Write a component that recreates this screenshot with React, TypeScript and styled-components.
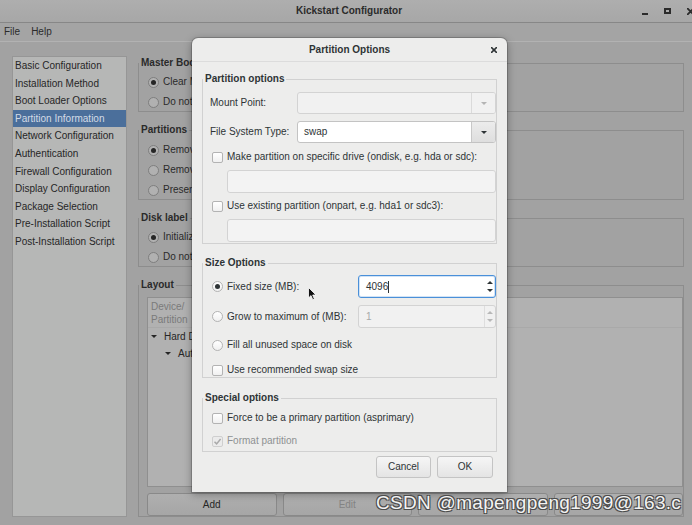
import React from "react";
import styled, { createGlobalStyle } from "styled-components";

const GlobalStyle = createGlobalStyle`
  html, body {
    margin: 0;
    padding: 0;
    background: #a2a2a2;
  }
  body {
    font-family: "Liberation Sans", Arial, sans-serif;
  }
  * {
    box-sizing: border-box;
  }
`;

const Screen = styled.div`
  position: relative;
  width: 692px;
  height: 525px;
  overflow: hidden;
  display: flex;
  flex-direction: column;
  background: #a2a2a2;
  color: #2a2a2a;
  font-size: 10px;
  line-height: 1.2;
`;

/* ---------- main window chrome ---------- */

const TitleBar = styled.div`
  flex: none;
  height: 23px;
  display: grid;
  grid-template-columns: 1fr auto 1fr;
  align-items: center;
  background: linear-gradient(#aeaeae, #a7a7a7);
  border-bottom: 1px solid #878787;
`;

const WindowTitle = styled.div`
  grid-column: 2;
  font-weight: bold;
  color: #2b2b2b;
  padding-left: 6px;
`;

const WindowControls = styled.div`
  grid-column: 3;
  justify-self: end;
  display: flex;
  align-items: center;
  gap: 16px;
  margin-right: -2px;
`;

const MinIcon = styled.span`
  width: 6px;
  height: 2px;
  margin-top: 5px;
  background: #2b2b2b;
`;

const MaxIcon = styled.span`
  width: 7px;
  height: 6px;
  border: 2px solid #2b2b2b;
`;

const MenuBar = styled.div`
  flex: none;
  height: 19px;
  display: flex;
  align-items: center;
  gap: 11px;
  padding-left: 4px;
  border-bottom: 1px solid #b2b2b2;
  background: #a4a4a4;
`;

const MenuItem = styled.span`
  color: #2b2b2b;
`;

const Body = styled.div`
  flex: 1;
  min-height: 0;
  display: flex;
  gap: 11px;
  padding: 14px 8px 8px 12px;
`;

const SideList = styled.div`
  flex: none;
  width: 115px;
  border: 1px solid #969696;
  background: #b6b7b6;
`;

const SideItem = styled.div<{ $selected?: boolean }>`
  height: 17.6px;
  line-height: 17.6px;
  padding-left: 2px;
  white-space: nowrap;
  color: ${(p) => (p.$selected ? "#d3dbe6" : "#262626")};
  background: ${(p) => (p.$selected ? "#4b6f9b" : "transparent")};
`;

const RightColumn = styled.div`
  flex: 1;
  min-width: 0;
  display: flex;
  flex-direction: column;
  gap: 11px;
`;

/* ---------- frames (GtkFrame look) ---------- */

const Fieldset = styled.fieldset<{ $light?: boolean; $grow?: boolean }>`
  margin: 0;
  padding: 0;
  min-width: 0;
  border: 1px solid ${(p) => (p.$light ? "#d1d1d1" : "#8d8d8d")};
  display: flex;
  flex-direction: column;
  flex: ${(p) => (p.$grow ? "1" : "none")};
  min-height: 0;
`;

const Legend = styled.legend`
  padding: 0 2px;
  margin: 0;
  line-height: 14px;
  font-weight: bold;
  white-space: nowrap;
`;

const FrameBody = styled.div<{ $pad: string; $grow?: boolean; $gap?: number }>`
  padding: ${(p) => p.$pad};
  display: flex;
  flex-direction: column;
  gap: ${(p) => p.$gap ?? 0}px;
  flex: ${(p) => (p.$grow ? "1" : "none")};
  min-height: 0;
`;

/* ---------- main window widgets ---------- */

const MainOption = styled.div`
  height: 18px;
  display: flex;
  align-items: center;
  gap: 4px;
  white-space: nowrap;
  color: #2a2a2a;
`;

const RadioCircle = styled.span<{ $on?: boolean; $dim?: boolean }>`
  flex: none;
  width: 11px;
  height: 11px;
  border-radius: 50%;
  border: 1px solid ${(p) => (p.$dim ? "#7e7e7e" : "#b3b3b3")};
  background: ${(p) => (p.$dim ? "#b1b1b1" : "linear-gradient(#ffffff, #f0f0f0)")};
  display: inline-flex;
  align-items: center;
  justify-content: center;

  &::after {
    content: "";
    width: 5px;
    height: 5px;
    border-radius: 50%;
    background: ${(p) => (p.$dim ? "#262626" : "#2e3436")};
    display: ${(p) => (p.$on ? "block" : "none")};
  }
`;

const Tree = styled.div`
  flex: 1;
  min-height: 0;
  border: 1px solid #8f8f8f;
  background: #b1b1b1;
  display: flex;
  flex-direction: column;
`;

const TreeHeader = styled.div`
  flex: none;
  height: 30px;
  padding: 2px 0 0 3px;
  border-bottom: 1px solid #a9a9a9;
  color: #7a7a7a;
  line-height: 13px;
`;

const TreeRow = styled.div<{ $depth: number }>`
  height: 17px;
  display: flex;
  align-items: center;
  gap: 7px;
  padding-left: ${(p) => 3 + p.$depth * 14}px;
  white-space: nowrap;
  color: #262626;
`;

const ButtonRow = styled.div`
  flex: none;
  height: 23px;
  margin-top: 6px;
  display: grid;
  grid-template-columns: repeat(4, 1fr);
  gap: 6px;
`;

const MainButton = styled.div<{ $disabled?: boolean }>`
  border: 1px solid #898989;
  border-radius: 3px;
  background: linear-gradient(#afafaf, #a6a6a6);
  color: ${(p) => (p.$disabled ? "#838383" : "#262626")};
  display: flex;
  align-items: center;
  justify-content: center;
`;

/* ---------- dialog ---------- */

const Dialog = styled.div`
  position: absolute;
  left: 192px;
  top: 38px;
  width: 315px;
  height: 454px;
  overflow: hidden;
  display: flex;
  flex-direction: column;
  background: #ededec;
  color: #2e3436;
  border-radius: 6px 6px 0 0;
  box-shadow: 0 0 0 1px rgba(0, 0, 0, 0.18), 0 2px 8px rgba(0, 0, 0, 0.35);
`;

const DialogTitle = styled.div`
  flex: none;
  height: 24px;
  padding-top: 1px;
  display: grid;
  grid-template-columns: 1fr auto 1fr;
  align-items: center;
  border-bottom: 1px solid #dcdcdc;
`;

const DialogTitleText = styled.div`
  grid-column: 2;
  font-weight: bold;
`;

const DialogClose = styled.div`
  grid-column: 3;
  justify-self: end;
  padding-right: 10px;
  display: flex;
`;

const DialogBody = styled.div`
  flex: 1;
  display: flex;
  flex-direction: column;
  gap: 12px;
  padding: 10px 10px 0 10px;
`;

const FieldGrid = styled.div<{ $labelWidth: number; $h: number; $mt?: number }>`
  display: grid;
  grid-template-columns: ${(p) => p.$labelWidth}px 1fr;
  align-items: center;
  height: ${(p) => p.$h}px;
  margin-top: ${(p) => p.$mt ?? 0}px;
`;

const FieldLabel = styled.div`
  padding-left: 7px;
  white-space: nowrap;
`;

const Option = styled.div<{ $h: number; $mt?: number; $disabled?: boolean }>`
  height: ${(p) => p.$h}px;
  margin-top: ${(p) => p.$mt ?? 0}px;
  display: flex;
  align-items: center;
  gap: 4px;
  padding-left: 9px;
  white-space: nowrap;
  color: ${(p) => (p.$disabled ? "#8e9192" : "#2e3436")};
`;

const CheckBox = styled.span<{ $disabled?: boolean }>`
  flex: none;
  width: 11px;
  height: 11px;
  border-radius: 2px;
  border: 1px solid ${(p) => (p.$disabled ? "#cfcfcf" : "#b3b3b3")};
  background: ${(p) => (p.$disabled ? "#ebebeb" : "linear-gradient(#ffffff, #f0f0f0)")};
  display: inline-flex;
  align-items: center;
  justify-content: center;
`;

const Combo = styled.div<{ $disabled?: boolean }>`
  height: 22px;
  display: flex;
  border: 1px solid ${(p) => (p.$disabled ? "#d3d3d3" : "#c3c3c3")};
  border-radius: 3px;
  background: ${(p) => (p.$disabled ? "#f1f1f1" : "#ffffff")};
  overflow: hidden;
`;

const ComboText = styled.div`
  flex: 1;
  display: flex;
  align-items: center;
  padding-left: 6px;
  color: #2e3436;
`;

const ComboButton = styled.div<{ $disabled?: boolean }>`
  flex: none;
  width: 24px;
  display: flex;
  align-items: center;
  justify-content: center;
  border-left: 1px solid ${(p) => (p.$disabled ? "#dadada" : "#c8c8c8")};
  background: ${(p) => (p.$disabled ? "#f1f1f1" : "linear-gradient(#ececec, #dedede)")};
`;

const Entry = styled.div`
  height: 23px;
  margin: 6px 0 0 24px;
  border: 1px solid #d3d3d3;
  border-radius: 3px;
  background: #f3f3f3;
`;

const Spin = styled.div<{ $focused?: boolean; $disabled?: boolean }>`
  height: 23px;
  display: flex;
  border: 1px solid ${(p) => (p.$focused ? "#4a90d9" : "#d3d3d3")};
  border-radius: 3px;
  background: ${(p) => (p.$disabled ? "#f1f1f1" : "#ffffff")};
  box-shadow: ${(p) => (p.$focused ? "inset 0 0 0 1px rgba(74, 144, 217, 0.25)" : "none")};
`;

const SpinText = styled.div<{ $disabled?: boolean }>`
  flex: 1;
  display: flex;
  align-items: center;
  padding-left: 7px;
  color: ${(p) => (p.$disabled ? "#a6a8a9" : "#2e3436")};
`;

const Caret = styled.span`
  width: 1px;
  height: 12px;
  background: #2e3436;
`;

const SpinArrows = styled.div<{ $disabled?: boolean }>`
  flex: none;
  width: 11px;
  display: flex;
  flex-direction: column;
  align-items: center;
  justify-content: space-between;
  padding: 5px 0;
  border-left: 1px solid ${(p) => (p.$disabled ? "#dedede" : "transparent")};
`;

const DialogButtons = styled.div`
  display: flex;
  justify-content: flex-end;
  gap: 6px;
  margin-top: -8px;
  padding-right: 4px;
`;

const DialogButton = styled.div<{ $w: number }>`
  width: ${(p) => p.$w}px;
  height: 22px;
  display: flex;
  align-items: center;
  justify-content: center;
  border: 1px solid #c4c4c4;
  border-radius: 3px;
  background: linear-gradient(#f6f6f6, #e4e4e4);
  color: #2e3436;
`;

/* ---------- overlays ---------- */

const Pointer = styled.svg`
  position: absolute;
  left: 308px;
  top: 287px;
`;

const Watermark = styled.div`
  position: absolute;
  left: 376px;
  top: 492px;
  font-size: 19px;
  line-height: 22px;
  letter-spacing: 0.3px;
  white-space: nowrap;
  color: #f3f3f3;
  text-shadow: 1px 1px 0 #4c4c4c, -1px -1px 0 #4c4c4c, 1px -1px 0 #4c4c4c, -1px 1px 0 #4c4c4c;
`;

/* ---------- small drawings ---------- */

const Triangle: React.FC<{ up?: boolean; color: string; w?: number; h?: number }> = ({
  up,
  color,
  w = 6,
  h = 3,
}) => (
  <svg width={w} height={h} viewBox={`0 0 ${w} ${h}`}>
    <polygon points={up ? `0,${h} ${w},${h} ${w / 2},0` : `0,0 ${w},0 ${w / 2},${h}`} fill={color} />
  </svg>
);

const CloseGlyph: React.FC<{ size: number; color: string; stroke?: number }> = ({ size, color, stroke = 1.6 }) => (
  <svg width={size} height={size} viewBox="0 0 10 10">
    <path d="M1 1 L9 9 M9 1 L1 9" stroke={color} strokeWidth={stroke * (10 / size)} strokeLinecap="round" />
  </svg>
);

const sideItems = [
  "Basic Configuration",
  "Installation Method",
  "Boot Loader Options",
  "Partition Information",
  "Network Configuration",
  "Authentication",
  "Firewall Configuration",
  "Display Configuration",
  "Package Selection",
  "Pre-Installation Script",
  "Post-Installation Script",
];

const App: React.FC = () => {
  return (
    <>
      <GlobalStyle />
      <Screen>
        <TitleBar>
          <WindowTitle>Kickstart Configurator</WindowTitle>
          <WindowControls>
            <MinIcon />
            <MaxIcon />
            <CloseGlyph size={7} color="#2b2b2b" stroke={1.8} />
          </WindowControls>
        </TitleBar>
        <MenuBar>
          <MenuItem>File</MenuItem>
          <MenuItem>Help</MenuItem>
        </MenuBar>

        <Body>
          <SideList>
            {sideItems.map((item) => (
              <SideItem key={item} $selected={item === "Partition Information"}>
                {item}
              </SideItem>
            ))}
          </SideList>

          <RightColumn>
            <Fieldset>
              <Legend>Master Boot Record</Legend>
              <FrameBody $pad="3px 0 0 9px" $gap={2}>
                <MainOption>
                  <RadioCircle $dim $on />
                  Clear Master Boot Record
                </MainOption>
                <MainOption>
                  <RadioCircle $dim />
                  Do not clear Master Boot Record
                </MainOption>
              </FrameBody>
            </Fieldset>

            <Fieldset>
              <Legend>Partitions</Legend>
              <FrameBody $pad="4px 0 0 9px" $gap={2}>
                <MainOption>
                  <RadioCircle $dim $on />
                  Remove all existing partitions
                </MainOption>
                <MainOption>
                  <RadioCircle $dim />
                  Remove existing Linux partitions
                </MainOption>
                <MainOption>
                  <RadioCircle $dim />
                  Preserve existing partitions
                </MainOption>
              </FrameBody>
            </Fieldset>

            <Fieldset>
              <Legend>Disk label</Legend>
              <FrameBody $pad="3px 0 0 9px" $gap={2}>
                <MainOption>
                  <RadioCircle $dim $on />
                  Initialize the disk label
                </MainOption>
                <MainOption>
                  <RadioCircle $dim />
                  Do not initialize the disk label
                </MainOption>
              </FrameBody>
            </Fieldset>

            <Fieldset $grow>
              <Legend>Layout</Legend>
              <FrameBody $pad="5px 0 0 8px" $grow>
                <Tree>
                  <TreeHeader>
                    Device/
                    <br />
                    Partition
                  </TreeHeader>
                  <TreeRow $depth={0}>
                    <Triangle color="#262626" w={6} h={3} />
                    Hard Drives
                  </TreeRow>
                  <TreeRow $depth={1}>
                    <Triangle color="#262626" w={6} h={3} />
                    Auto
                  </TreeRow>
                </Tree>
                <ButtonRow>
                  <MainButton>Add</MainButton>
                  <MainButton $disabled>Edit</MainButton>
                  <MainButton $disabled>Delete</MainButton>
                  <MainButton>RAID</MainButton>
                </ButtonRow>
              </FrameBody>
            </Fieldset>
          </RightColumn>
        </Body>

        <Dialog>
          <DialogTitle>
            <DialogTitleText>Partition Options</DialogTitleText>
            <DialogClose>
              <CloseGlyph size={6} color="#2e3436" stroke={1.5} />
            </DialogClose>
          </DialogTitle>

          <DialogBody>
            <Fieldset $light>
              <Legend>Partition options</Legend>
              <FrameBody $pad="6px 0 1px 0">
                <FieldGrid $labelWidth={94} $h={22}>
                  <FieldLabel>Mount Point:</FieldLabel>
                  <Combo $disabled>
                    <ComboText />
                    <ComboButton $disabled>
                      <Triangle color="#b4b4b4" />
                    </ComboButton>
                  </Combo>
                </FieldGrid>
                <FieldGrid $labelWidth={94} $h={22} $mt={7}>
                  <FieldLabel>File System Type:</FieldLabel>
                  <Combo>
                    <ComboText>swap</ComboText>
                    <ComboButton>
                      <Triangle color="#2e3436" />
                    </ComboButton>
                  </Combo>
                </FieldGrid>
                <Option $h={14} $mt={7}>
                  <CheckBox />
                  Make partition on specific drive (ondisk, e.g. hda or sdc):
                </Option>
                <Entry />
                <Option $h={14} $mt={6}>
                  <CheckBox />
                  Use existing partition (onpart, e.g. hda1 or sdc3):
                </Option>
                <Entry />
              </FrameBody>
            </Fieldset>

            <Fieldset $light>
              <Legend>Size Options</Legend>
              <FrameBody $pad="5px 0 0 0">
                <FieldGrid $labelWidth={155} $h={23}>
                  <Option $h={23}>
                    <RadioCircle $on />
                    Fixed size (MB):
                  </Option>
                  <Spin $focused>
                    <SpinText>
                      4096
                      <Caret />
                    </SpinText>
                    <SpinArrows>
                      <Triangle up color="#2e3436" />
                      <Triangle color="#2e3436" />
                    </SpinArrows>
                  </Spin>
                </FieldGrid>
                <FieldGrid $labelWidth={155} $h={23} $mt={7}>
                  <Option $h={23}>
                    <RadioCircle />
                    Grow to maximum of (MB):
                  </Option>
                  <Spin $disabled>
                    <SpinText $disabled>1</SpinText>
                    <SpinArrows $disabled>
                      <Triangle up color="#b8b8b8" />
                      <Triangle color="#b8b8b8" />
                    </SpinArrows>
                  </Spin>
                </FieldGrid>
                <Option $h={24} $mt={5}>
                  <RadioCircle />
                  Fill all unused space on disk
                </Option>
                <Option $h={14} $mt={6}>
                  <CheckBox />
                  Use recommended swap size
                </Option>
              </FrameBody>
            </Fieldset>

            <Fieldset $light style={{ marginTop: 1 }}>
              <Legend>Special options</Legend>
              <FrameBody $pad="6px 0 3px 0">
                <Option $h={14}>
                  <CheckBox />
                  Force to be a primary partition (asprimary)
                </Option>
                <Option $h={14} $mt={9} $disabled>
                  <CheckBox $disabled>
                    <svg width="9" height="9" viewBox="0 0 9 9">
                      <path d="M1.5 4.8 L3.6 6.9 L7.6 2" stroke="#a9a9a9" strokeWidth="1.5" fill="none" />
                    </svg>
                  </CheckBox>
                  Format partition
                </Option>
              </FrameBody>
            </Fieldset>

            <DialogButtons>
              <DialogButton $w={55}>Cancel</DialogButton>
              <DialogButton $w={56}>OK</DialogButton>
            </DialogButtons>
          </DialogBody>
        </Dialog>

        <Pointer width="10" height="14" viewBox="0 0 10 14">
          <path
            d="M0.5 0.5 L0.5 11 L3 8.6 L4.8 12.8 L6.4 12.1 L4.7 8 L8 8 Z"
            fill="#111"
            stroke="#ffffff"
            strokeWidth="0.8"
          />
        </Pointer>

        <Watermark>CSDN @mapengpeng1999@163.c</Watermark>
      </Screen>
    </>
  );
};

export default App;
